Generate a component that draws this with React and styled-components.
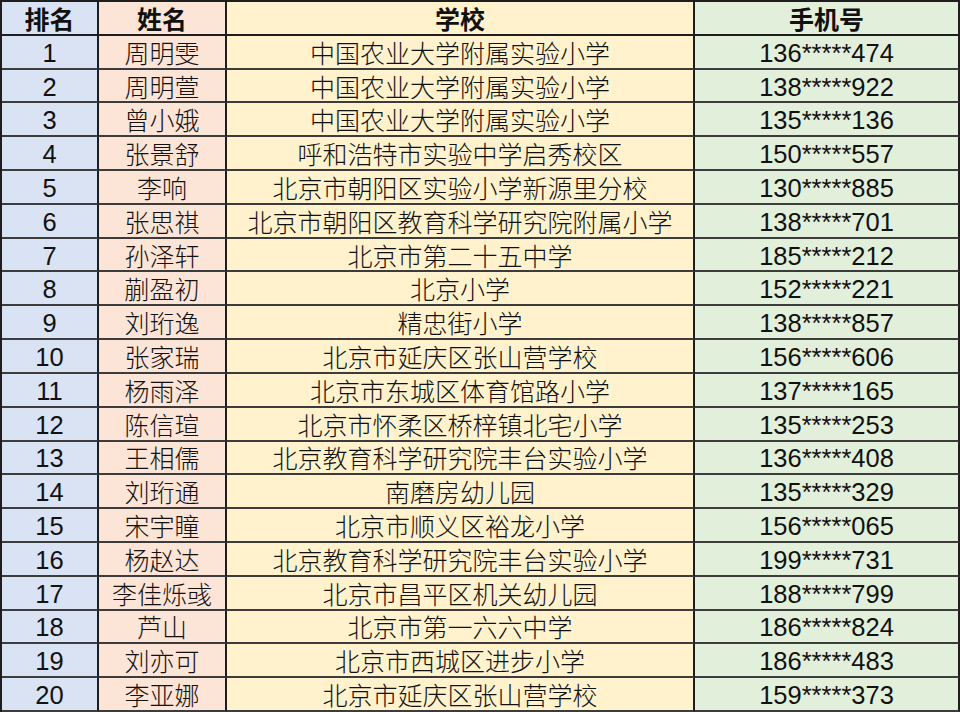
import React from "react";
import styled, { createGlobalStyle } from "styled-components";

const GlobalStyle = createGlobalStyle`
  html, body {
    margin: 0;
    padding: 0;
    background: #ffffff;
  }
`;

const COLORS = ["#dae3f3", "#fce4d6", "#fff2cc", "#e2efda"];

const Sheet = styled.div`
  display: grid;
  grid-template-columns: 97px 128px 468px 1fr;
  grid-template-rows: repeat(21, 1fr);
  width: 960px;
  height: 712px;
  box-sizing: border-box;
  border-top: 2px solid #1e1e1e;
  border-left: 2px solid #1e1e1e;
  color: #111;
`;

const Cell = styled.div`
  display: flex;
  align-items: center;
  justify-content: center;
  min-height: 0;
  background: ${({ $col }) => COLORS[$col]};
  border-right: 2px solid #1e1e1e;
  border-bottom: 2px solid ${({ $head }) => ($head ? "#1e1e1e" : "#3c3c3c")};
  font-family: ${({ $num }) =>
    $num
      ? '"Liberation Sans", Arial, sans-serif'
      : '"Noto Sans CJK SC", "Noto Sans", sans-serif'};
  font-size: ${({ $num }) => ($num ? "25.5px" : "25px")};
  font-weight: ${({ $head }) => ($head ? 700 : 300)};
  line-height: 30px;
  white-space: nowrap;
  padding-top: ${({ $num }) => ($num ? "2px" : "0")};
`;

const rows = [
  ["1", "周明雯", "中国农业大学附属实验小学", "136*****474"],
  ["2", "周明萱", "中国农业大学附属实验小学", "138*****922"],
  ["3", "曾小娥", "中国农业大学附属实验小学", "135*****136"],
  ["4", "张景舒", "呼和浩特市实验中学启秀校区", "150*****557"],
  ["5", "李响", "北京市朝阳区实验小学新源里分校", "130*****885"],
  ["6", "张思祺", "北京市朝阳区教育科学研究院附属小学", "138*****701"],
  ["7", "孙泽轩", "北京市第二十五中学", "185*****212"],
  ["8", "蒯盈初", "北京小学", "152*****221"],
  ["9", "刘珩逸", "精忠街小学", "138*****857"],
  ["10", "张家瑞", "北京市延庆区张山营学校", "156*****606"],
  ["11", "杨雨泽", "北京市东城区体育馆路小学", "137*****165"],
  ["12", "陈信瑄", "北京市怀柔区桥梓镇北宅小学", "135*****253"],
  ["13", "王相儒", "北京教育科学研究院丰台实验小学", "136*****408"],
  ["14", "刘珩通", "南磨房幼儿园", "135*****329"],
  ["15", "宋宇瞳", "北京市顺义区裕龙小学", "156*****065"],
  ["16", "杨赵达", "北京教育科学研究院丰台实验小学", "199*****731"],
  ["17", "李佳烁彧", "北京市昌平区机关幼儿园", "188*****799"],
  ["18", "芦山", "北京市第一六六中学", "186*****824"],
  ["19", "刘亦可", "北京市西城区进步小学", "186*****483"],
  ["20", "李亚娜", "北京市延庆区张山营学校", "159*****373"],
];

const headers = ["排名", "姓名", "学校", "手机号"];

const App = () => {
  return (
    <>
      <GlobalStyle />
      <Sheet>
        {headers.map((h, i) => (
          <Cell key={h} $col={i} $head>
            {h}
          </Cell>
        ))}
        {rows.map((r) =>
          r.map((v, i) => (
            <Cell key={r[0] + "-" + i} $col={i} $num={i === 0 || i === 3}>
              {v}
            </Cell>
          ))
        )}
      </Sheet>
    </>
  );
};

export default App;
